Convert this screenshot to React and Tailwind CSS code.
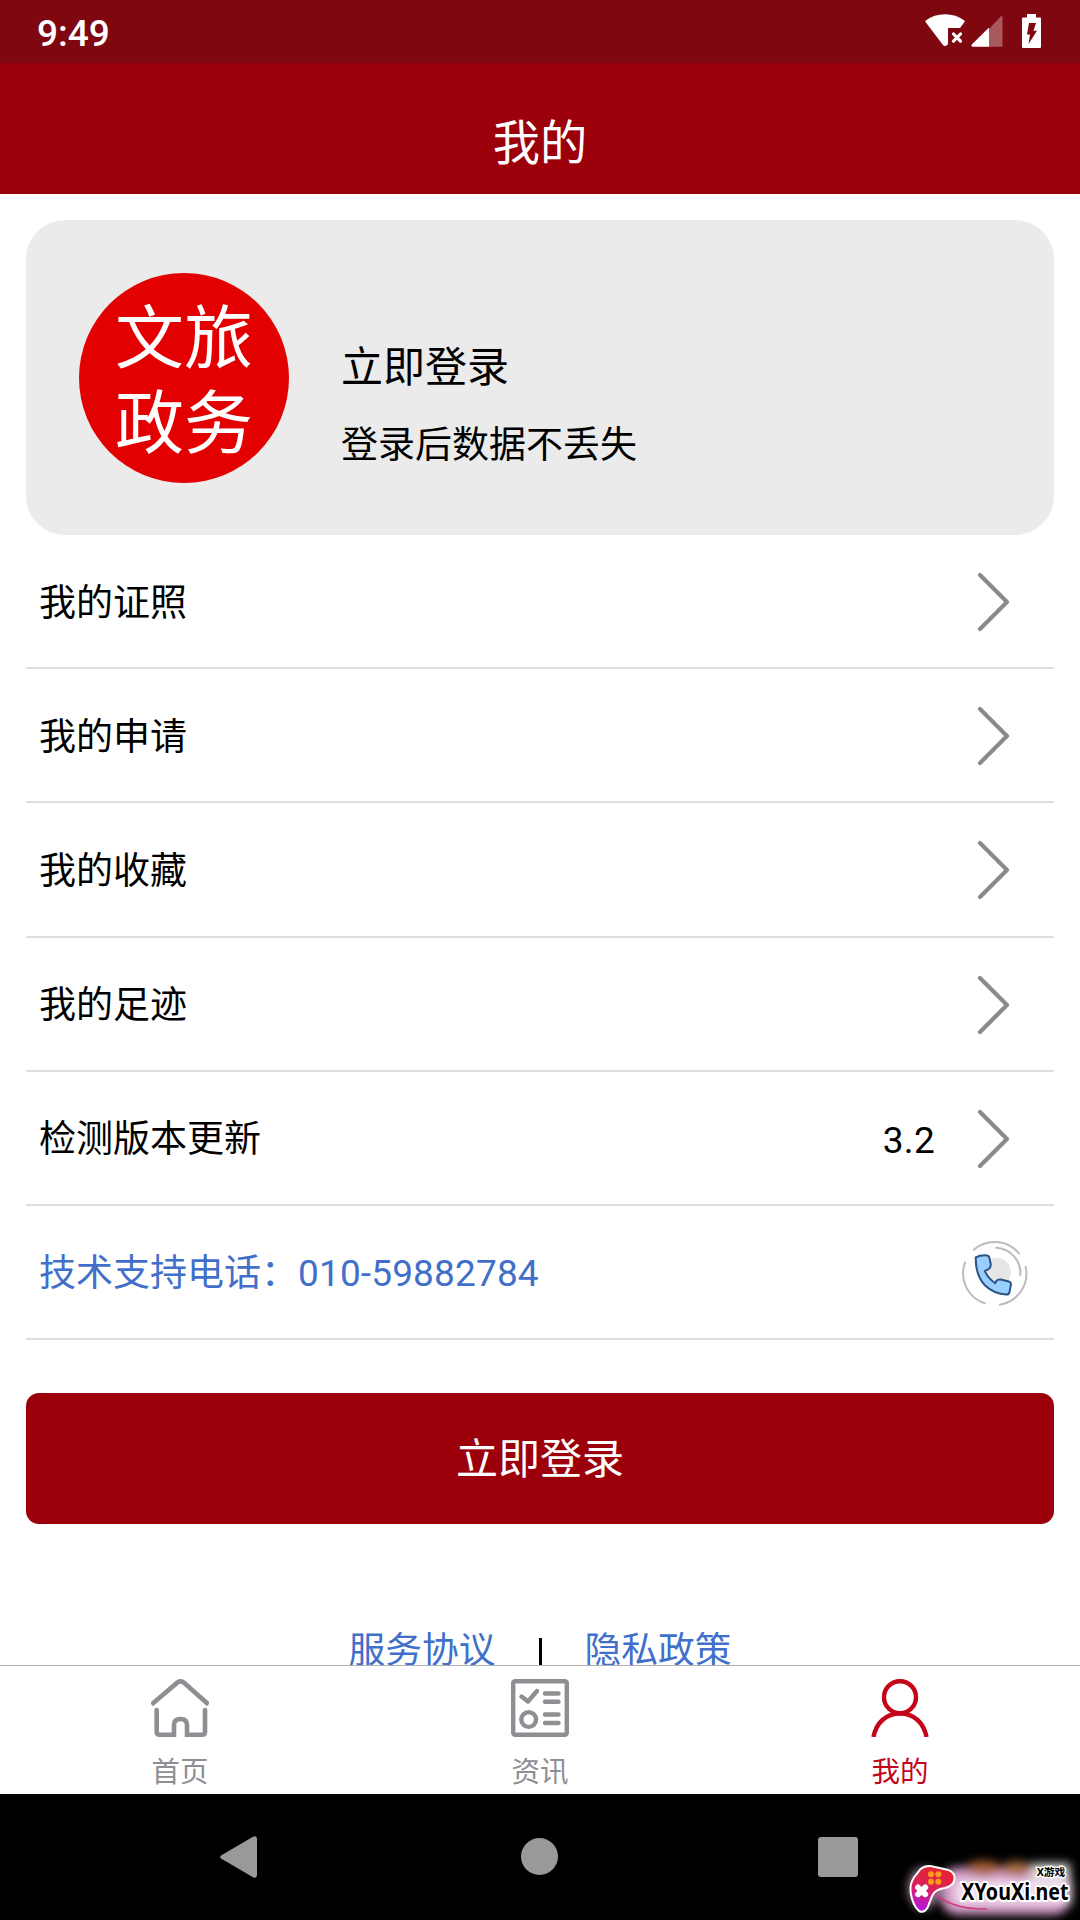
const menuRows = [
  { label: '我的证照' },
  { label: '我的申请' },
  { label: '我的收藏' },
  { label: '我的足迹' },
  { label: '检测版本更新', value: '3.2' },
];

const tabs = [
  { label: '首页', icon: HomeIcon },
  { label: '资讯', icon: NewsIcon },
  { label: '我的', icon: UserIcon, active: true },
];

function HomeIcon() {
  return (
    <svg viewBox="0 0 58 58" className="h-[58px] w-[58px]" fill="none" stroke="currentColor" strokeWidth="4.6">
      <path d="M0.5 25.5 L26.5 3.4 Q29.5 1.2 32.5 3.4 L57.5 25.5" />
      <path
        d="M5.7 31 V52.700 Q5.7 55.700 8.7 55.700 H23 V46 Q23 40 29.5 40 Q36 40 36 46 V55.700 H51 Q54 55.700 54 52.700 V31"
        strokeLinecap="round"
      />
    </svg>
  );
}

function NewsIcon() {
  return (
    <svg viewBox="0 0 58 58" className="h-[58px] w-[58px]" fill="none" stroke="currentColor" strokeWidth="4.4">
      <rect x="2.2" y="2.2" width="53.6" height="53.6" rx="2" />
      <g strokeLinecap="round" strokeLinejoin="round">
        <path d="M10.5 17.5 L17 22.5 L26 12" />
        <path d="M34 14.5 H47.500 M34 22.8 H47.500 M34 35.5 H47.500 M34 44 H47.500" />
      </g>
      <circle cx="17.7" cy="40.5" r="7.4" />
    </svg>
  );
}

function UserIcon() {
  return (
    <svg viewBox="0 0 58 58" className="h-[58px] w-[58px]" fill="none" stroke="currentColor" strokeWidth="4.4">
      <circle cx="29" cy="18.2" r="16" />
      <path d="M2.500 58 C5 44 15 34.5 29 34.5 S53 44 55.500 58" />
    </svg>
  );
}

function Chevron() {
  return (
    <svg viewBox="0 0 34 62" className="h-[62px] w-[34px]" fill="none" stroke="#8a8a8a" strokeWidth="4.2">
      <path d="M4 4 L31 31 L4 58" strokeLinecap="round" strokeLinejoin="round" />
    </svg>
  );
}

function PhoneIcon() {
  return (
    <svg viewBox="302 480 200 200" className="h-[67px] w-[67px]" fill="none">
      <circle cx="408" cy="576" r="43" fill="#e6e6e6" />
      <g stroke="#bcbcc0" strokeWidth="6" strokeLinecap="round">
        <path d="M340 509 A95 95 0 0 1 475 520" />
        <path d="M314 547 A94 94 0 0 0 373 669" />
        <path d="M495 560 A94 94 0 0 1 418 673" />
        <path d="M407 503 A76 76 0 0 1 479 585" />
      </g>
      <path
        d="M346 532 Q358 525 380 526 Q386 527 387 534 L391 553 Q391 562 384 567 L373 573 Q383 595 404 609 L408 602 Q412 597 420 598 L445 604 Q452 606 451 613 L447 634 Q446 643 437 643 Q402 642 374 616 Q345 585 346 532 Z"
        fill="#99cfff"
        stroke="#2b5387"
        strokeWidth="6"
        strokeLinejoin="round"
      />
    </svg>
  );
}

function StatusBar() {
  return (
    <div className="flex h-[63px] shrink-0 items-start justify-between bg-[#7f070f] pl-[37px] pr-[39px] text-white">
      <span className="pt-3 text-[37px] font-medium leading-[44px]">9:49</span>
      <div className="flex items-start pt-3.5">
        <svg viewBox="0 0 40 33" className="h-[33px] w-10" fill="#fff">
          <path d="M0.500 8 Q0 7.300 0.800 6.500 Q9 0.200 20 0.200 Q31 0.200 39.300 6.500 Q40 7.300 39.500 8 L35 14 H23 V30 Q22 32 20 32 Q18.800 32 18 31 Z" />
          <path d="M28.500 20 L35.500 27.200 M35.500 20 L28.500 27.200" stroke="#fff" strokeWidth="3.200" strokeLinecap="round" />
        </svg>
        <svg viewBox="0 0 32 33" className="ml-1.5 h-[33px] w-8" fill="#fff">
          <path d="M18 15 L29.500 2.800 Q31.500 1 31.500 3 V32.700 H18 Z" opacity="0.33" />
          <path d="M18 13.500 V32.700 H1.500 Q-0.200 32 0.800 30.500 Z" />
        </svg>
        <svg viewBox="0 0 19 34" className="ml-[19px] h-[34px] w-[19px]">
          <path d="M5 0 H14 V3.500 H18 Q19 3.500 19 4.500 V33 Q19 34 18 34 H1 Q0 34 0 33 V4.500 Q0 3.500 1 3.500 H5 Z" fill="#fff" />
          <path d="M7 9 H14 L11.500 16.800 H15 L6.500 30 L8 20.500 H5 Z" fill="#7f070f" />
        </svg>
      </div>
    </div>
  );
}

function ProfileCard() {
  return (
    <section className="flex h-[315px] items-center rounded-[39px] bg-[#ebebeb] px-[53px]">
      <div className="flex h-[210px] w-[210px] shrink-0 flex-col items-center justify-center rounded-full bg-[#e30000] pt-2 text-[69px] leading-[85px] text-white">
        <span>文旅</span>
        <span>政务</span>
      </div>
      <div className="ml-[52px] pt-[54px]">
        <p className="text-[42px] leading-[62px]">立即登录</p>
        <p className="mt-5 text-[37px] leading-[54px]">登录后数据不丢失</p>
      </div>
    </section>
  );
}

function TabBar() {
  return (
    <nav className="flex h-[129px] shrink-0 border-t border-[#b0b0b0] bg-white">
      {tabs.map(({ label, icon: Icon, active }) => (
        <button
          key={label}
          type="button"
          className={`flex flex-1 flex-col items-center pt-[13px] ${active ? 'text-[#c40419]' : 'text-[#8e8e93]'}`}
        >
          <Icon />
          <span className="mt-4 text-[28.5px] leading-10">{label}</span>
        </button>
      ))}
    </nav>
  );
}

function Watermark() {
  return (
    <svg viewBox="0 0 570 240" className="absolute bottom-0 right-0 h-20 w-[190px]">
      <defs>
        <filter id="glow" x="-30%" y="-50%" width="160%" height="200%">
          <feGaussianBlur stdDeviation="14" />
        </filter>
        <linearGradient id="pad" x1="0.6" y1="0" x2="0.3" y2="1">
          <stop offset="0" stopColor="#e6252c" />
          <stop offset="0.5" stopColor="#d9215a" />
          <stop offset="1" stopColor="#b414e6" />
        </linearGradient>
      </defs>
      <g filter="url(#glow)">
        <rect x="150" y="82" width="395" height="142" rx="55" fill="#d39cc9" />
        <ellipse cx="280" cy="84" rx="52" ry="22" fill="#a5602f" />
        <ellipse cx="380" cy="86" rx="45" ry="22" fill="#a86d40" />
        <rect x="195" y="122" width="350" height="68" fill="#f3dff0" />
        <rect x="425" y="70" width="115" height="50" fill="#ddd" />
        <ellipse cx="100" cy="145" rx="44" ry="62" fill="#a58a9e" />
      </g>
      <path
        d="M92 87 Q108 74 132 80 L172 89 Q194 96 194 116 Q191 139 164 144 Q136 148 127 166 L112 204 Q102 220 87 213 Q68 197 62 158 Q58 132 73 111 Z"
        fill="url(#pad)"
        stroke="#fff"
        strokeWidth="6"
      />
      <path d="M138 164 Q190 209 292 207" fill="none" stroke="#d33a82" strokeWidth="5" />
      <g fill="#ff9a16">
        <circle cx="123" cy="103" r="9" />
        <circle cx="145" cy="103" r="9" />
        <circle cx="123" cy="125" r="9" />
        <circle cx="145" cy="125" r="9" />
      </g>
      <path d="M84 142 L106 163 M106 142 L84 163" stroke="#fff" strokeWidth="17" strokeLinecap="round" />
      <g fill="#000" stroke="#fff" strokeLinejoin="round" className="font-['Noto_Sans','Noto_Sans_CJK_SC',sans-serif] font-bold [paint-order:stroke]">
        <text x="214" y="180" fontSize="70" strokeWidth="12" textLength="322" lengthAdjust="spacingAndGlyphs">
          XYouXi.net
        </text>
        <text x="440" y="108" fontSize="32" strokeWidth="8" textLength="86" lengthAdjust="spacingAndGlyphs">
          X游戏
        </text>
      </g>
    </svg>
  );
}

function SystemNav() {
  return (
    <div className="relative flex h-[126px] shrink-0 items-center bg-black pl-[220px]">
      <svg viewBox="0 0 37 42" className="h-[42px] w-[37px]" fill="#999">
        <path d="M1 19.500 L33 0.800 Q37 -1 37 3 V39 Q37 43 33 41.200 L1 22.500 Q-0.600 21 1 19.500 Z" />
      </svg>
      <div className="mb-px ml-[264px] h-[37px] w-[37px] rounded-full bg-[#999]" />
      <div className="ml-[260px] h-10 w-10 rounded-[3px] bg-[#999]" />
      <Watermark />
    </div>
  );
}

export default function App() {
  return (
    <div
      lang="zh-CN"
      className="flex h-[1920px] w-[1080px] flex-col overflow-hidden bg-white font-['Roboto','Noto_Sans_CJK_SC',sans-serif] text-black"
    >
      <StatusBar />
      <header className="flex h-[131px] shrink-0 items-end justify-center bg-[#9b000b] pb-[15px]">
        <h1 className="text-[47.25px] leading-[70px] text-white">我的</h1>
      </header>

      <main className="min-h-0 flex-1 overflow-hidden px-[26px] pt-[26px]">
        <ProfileCard />

        <ul className="text-[37px] leading-[54px]">
          {menuRows.map(({ label, value }) => (
            <li
              key={label}
              className="flex h-[134.2px] items-center border-b-2 border-[#dedede] pl-[13px] pr-11 pt-0.5"
            >
              <span className="flex-1 pt-[3px]">{label}</span>
              {value && <span className="mr-[41px] pt-1 tracking-[0.3px]">{value}</span>}
              <Chevron />
            </li>
          ))}
          <li className="flex h-[134px] items-center border-b-2 border-[#dedede] pl-[13px] pr-[26px] pt-[3px] text-[#416fc9]">
            <span className="flex-1 pt-0.5">
              技术支持电话：<span className="tracking-[0.15px]">010-59882784</span>
            </span>
            <PhoneIcon />
          </li>
        </ul>

        <button
          type="button"
          className="mt-[53px] flex h-[131px] w-full items-center justify-center rounded-[13px] bg-[#9b000b] pt-1 text-[42px] leading-[62px] text-white"
        >
          立即登录
        </button>

        <div className="mt-[98px] flex justify-center text-[36.75px] leading-[54px] text-[#416fc9]">
          <a className="pt-0.5">服务协议</a>
          <span className="mx-[43px] mt-4 h-9 w-[3px] bg-black" />
          <a className="pt-0.5">隐私政策</a>
        </div>
      </main>

      <TabBar />
      <SystemNav />
    </div>
  );
}
